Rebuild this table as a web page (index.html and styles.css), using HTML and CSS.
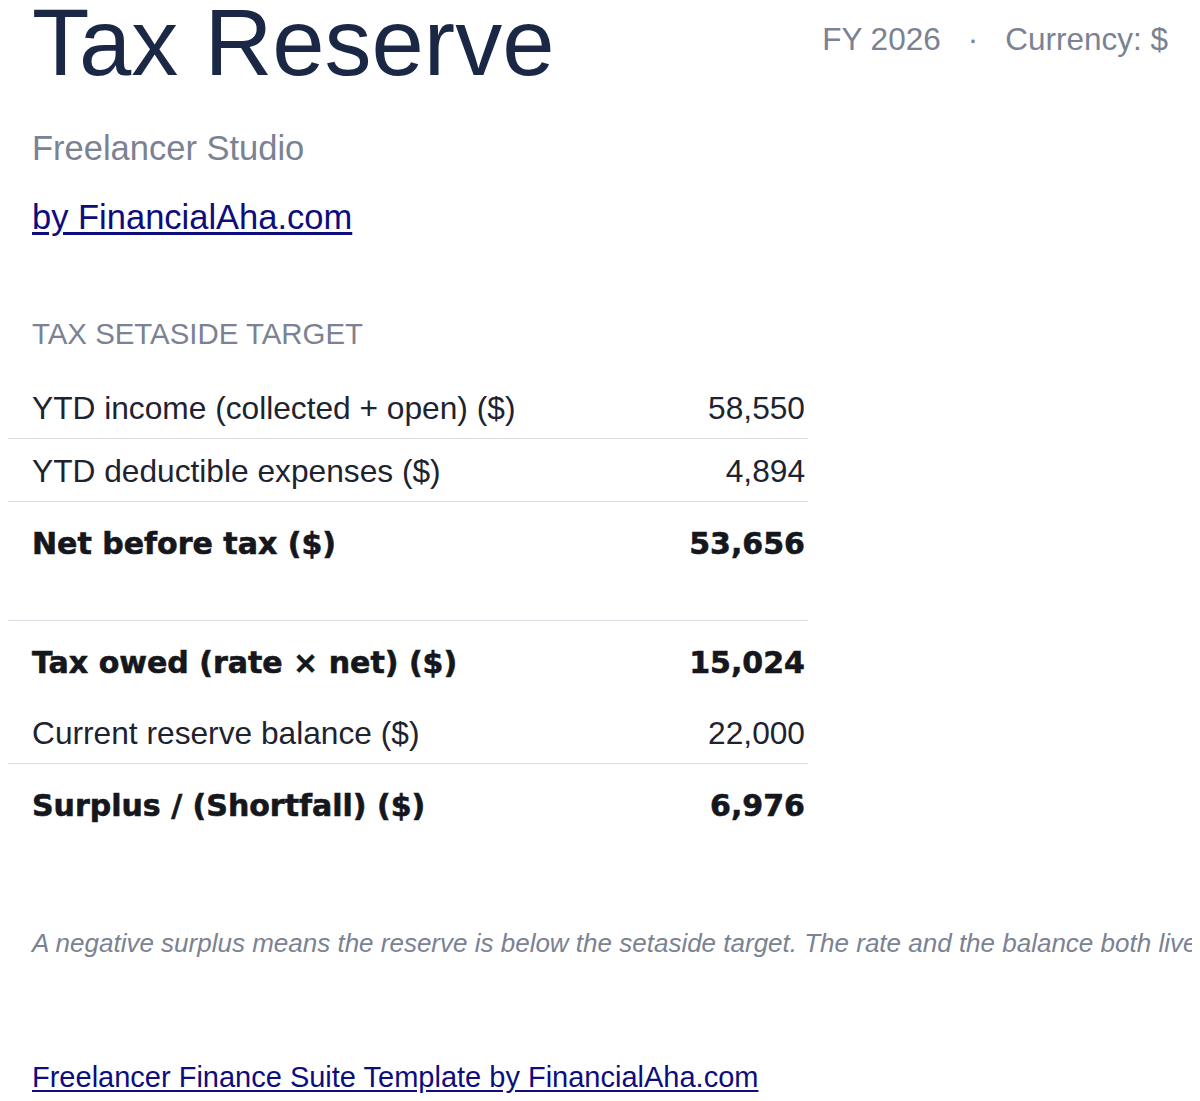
FILE: index.html
```html
<!DOCTYPE html>
<html lang="en">
<head>
<meta charset="utf-8">
<title>Tax Reserve</title>
<link rel="stylesheet" href="styles.css">
</head>
<body>
<div class="page">
  <header class="top">
    <div class="titles">
      <h1 class="title">Tax Reserve</h1>
      <p class="sub">Freelancer Studio</p>
      <p class="by"><a href="#">by FinancialAha.com</a></p>
    </div>
    <div class="meta"><span>FY 2026</span><span class="dot">·</span><span>Currency: $</span></div>
  </header>

  <section class="block">
    <h2 class="label">TAX SETASIDE TARGET</h2>
    <table class="calc">
      <tbody>
        <tr class="row line"><td class="name">YTD income (collected + open) ($)</td><td class="num">58,550</td></tr>
        <tr class="row line"><td class="name">YTD deductible expenses ($)</td><td class="num">4,894</td></tr>
        <tr class="row total"><td class="name">Net before tax ($)</td><td class="num">53,656</td></tr>
        <tr class="spacer line"><td></td><td></td></tr>
        <tr class="row total"><td class="name">Tax owed (rate × net) ($)</td><td class="num">15,024</td></tr>
        <tr class="row line"><td class="name">Current reserve balance ($)</td><td class="num">22,000</td></tr>
        <tr class="row total"><td class="name">Surplus / (Shortfall) ($)</td><td class="num">6,976</td></tr>
      </tbody>
    </table>
  </section>

  <p class="note">A negative surplus means the reserve is below the setaside target. The rate and the balance both live on the Settings sheet.</p>

  <p class="foot"><a href="#">Freelancer Finance Suite Template by FinancialAha.com</a></p>
</div>
</body>
</html>
```

FILE: styles.css
```css
html, body {
  margin: 0;
  padding: 0;
  background: #ffffff;
}

body {
  font-family: "Liberation Sans", Arial, sans-serif;
  color: #1e2330;
}

.page {
  margin: 0 8px;
}

.top {
  display: flex;
  justify-content: space-between;
  align-items: flex-start;
  padding: 0 24px;
}

.title {
  margin: 0;
  font-size: 94px;
  line-height: 85px;
  font-weight: 400;
  color: #1a2745;
}

.sub {
  margin: 43px 0 0;
  font-size: 34.5px;
  line-height: 40px;
  color: #7a8293;
}

.by {
  margin: 29px 0 0;
  font-size: 34.5px;
  line-height: 40px;
}

.by a,
.foot a {
  color: #0d0d7d;
  text-decoration: underline;
  text-underline-offset: 3px;
}

.meta {
  padding-top: 21px;
  font-size: 31.5px;
  line-height: 36px;
  color: #7a8293;
  display: flex;
}

.dot {
  margin: 0 27px;
}

.label {
  margin: 80px 0 0;
  padding-left: 24px;
  font-size: 29.4px;
  line-height: 34px;
  font-weight: 400;
  color: #7a8293;
}

.calc {
  margin-top: 25px;
  width: 800px;
  border-collapse: collapse;
}

.calc td {
  padding: 14px 0 12px;
  font-size: 31.7px;
  line-height: 36px;
  vertical-align: baseline;
}

.calc td.name {
  padding-left: 24px;
  text-align: left;
}

.calc td.num {
  padding-right: 3px;
  text-align: right;
}

.calc tr.line td {
  border-bottom: 1px solid #d9dce3;
}

.calc tr.total td {
  padding-top: 24px;
  padding-bottom: 20px;
  font-family: "DejaVu Sans", sans-serif;
  font-weight: 700;
  font-size: 30px;
  color: #15171c;
  -webkit-text-stroke: 0.6px #15171c;
}

.calc tr.spacer td {
  padding: 0;
  height: 38px;
}

.note {
  margin: 84px 0 0;
  padding-left: 24px;
  font-size: 26px;
  line-height: 30px;
  font-style: italic;
  color: #7a8293;
  white-space: nowrap;
  overflow: hidden;
}

.foot {
  margin: 102px 0 0;
  padding-left: 24px;
  font-size: 29px;
  line-height: 34px;
}
```
